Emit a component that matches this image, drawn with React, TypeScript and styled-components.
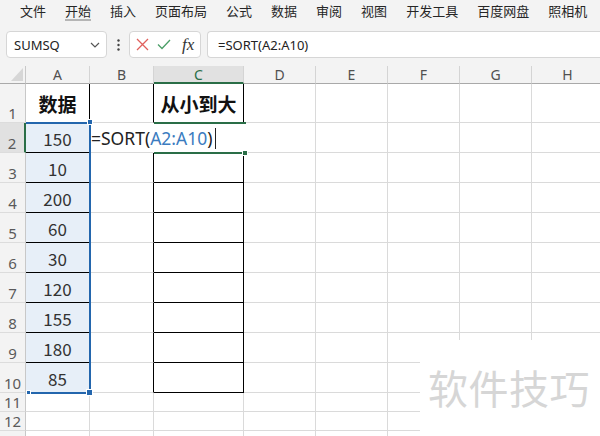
import React from 'react';
import styled, { createGlobalStyle } from 'styled-components';

const GlobalStyle = createGlobalStyle`
  html, body {
    margin: 0;
    padding: 0;
  }
  body {
    width: 600px;
    height: 436px;
    overflow: hidden;
    background: #ffffff;
    font-family: "Noto Sans", "Noto Sans CJK SC", sans-serif;
  }
`;

const GRID = '#dadada';
const INK = '#000000';
const GREEN = '#2a6e47';
const BLUE = '#2366ad';

const Page = styled.div`
  width: 600px;
  height: 436px;
  overflow: hidden;
  display: flex;
  flex-direction: column;
`;

const TopArea = styled.div`
  background: #f3f3f3;
  padding-bottom: 8px;
`;

const MenuBar = styled.div`
  height: 22px;
  display: flex;
  align-items: flex-start;
  gap: 19px;
  padding-left: 20px;
`;

const MenuItem = styled.div<{ $active?: boolean }>`
  height: 18px;
  padding-top: 1px;
  display: flex;
  align-items: center;
  font-family: "Noto Sans CJK SC", sans-serif;
  font-size: 13px;
  color: #262626;
  white-space: nowrap;
  border-bottom: 2px solid ${(p) => (p.$active ? '#b5b5b5' : 'transparent')};
`;

const FormulaBar = styled.div`
  margin-top: 9px;
  height: 27px;
  display: flex;
`;

const NameBox = styled.div`
  margin-left: 6px;
  width: 101px;
  box-sizing: border-box;
  background: #fff;
  border: 1px solid #d6d6d6;
  border-radius: 4px;
  display: flex;
  align-items: center;
  justify-content: space-between;
  padding: 0 6px 0 7px;
  font-size: 13px;
  color: #222;
`;

const Dots = styled.div`
  width: 22px;
  display: flex;
  align-items: center;
  justify-content: center;
`;

const IconBox = styled.div`
  width: 72px;
  box-sizing: border-box;
  background: #fff;
  border: 1px solid #d6d6d6;
  border-radius: 4px;
  display: flex;
  align-items: center;
  gap: 8px;
  padding-left: 6px;
`;

const Fx = styled.span`
  font-family: "Liberation Serif", serif;
  font-style: italic;
  font-size: 17px;
  color: #333;
  margin-left: 3px;
  line-height: 1;
`;

const FormulaInput = styled.div`
  margin-left: 6px;
  flex: 1;
  background: #fff;
  border: 1px solid #d6d6d6;
  border-right: none;
  border-radius: 4px 0 0 4px;
  display: flex;
  align-items: center;
  padding-left: 10px;
  font-size: 13px;
  color: #222;
`;

const Sheet = styled.div`
  position: relative;
  display: grid;
  grid-template-columns: 26px 64px 64px 90px 72px 72px 72px 72px 72px;
  grid-template-rows: 18px 39px repeat(9, 30px) repeat(3, 19px);
`;

const Corner = styled.div`
  background: #f3f3f3;
  border-right: 1px solid #c8c8c8;
  border-bottom: 1px solid #a9a9a9;
  box-sizing: border-box;
  display: flex;
  align-items: flex-end;
  justify-content: flex-end;
  padding: 0 2px 2px 0;
`;

const ColHead = styled.div<{ $active?: boolean }>`
  box-sizing: border-box;
  background: ${(p) => (p.$active ? '#e1e1e1' : '#f3f3f3')};
  border-right: 1px solid #d4d4d4;
  border-bottom: ${(p) => (p.$active ? `2px solid ${GREEN}` : '1px solid #a9a9a9')};
  display: flex;
  align-items: center;
  justify-content: center;
  font-size: 14px;
  color: ${(p) => (p.$active ? GREEN : '#505050')};
  line-height: 1;
  padding-top: 1px;
`;

const RowHead = styled.div<{ $active?: boolean }>`
  box-sizing: border-box;
  background: ${(p) => (p.$active ? '#e1e1e1' : '#f3f3f3')};
  border-right: ${(p) => (p.$active ? `2px solid ${GREEN}` : '1px solid #c8c8c8')};
  border-bottom: 1px solid #dcdcdc;
  display: flex;
  align-items: flex-end;
  justify-content: center;
  font-size: 15px;
  line-height: 1;
  color: #5a5a5a;
  padding-bottom: 1px;
`;

const Cell = styled.div<{ $fill?: string; $right?: string; $bottom?: string; $bold?: boolean; $left?: boolean }>`
  box-sizing: border-box;
  background: ${(p) => p.$fill ?? '#ffffff'};
  border-right: 1px solid ${(p) => p.$right ?? GRID};
  border-bottom: 1px solid ${(p) => p.$bottom ?? GRID};
  display: flex;
  align-items: center;
  justify-content: ${(p) => (p.$left ? 'flex-start' : 'center')};
  font-family: "Noto Sans CJK SC", sans-serif;
  font-size: ${(p) => (p.$bold ? '19px' : '17px')};
  font-weight: ${(p) => (p.$bold ? 700 : 400)};
  color: ${(p) => (p.$bold ? '#111' : '#333')};
  white-space: nowrap;
  overflow: visible;
  padding-top: 1px;
`;

const FormulaText = styled.span`
  position: relative;
  z-index: 2;
  display: flex;
  align-items: center;
  padding-left: 1px;
  font-family: "Noto Sans", sans-serif;
  font-size: 17.5px;
  color: #222;
`;

const Ref = styled.span`
  color: #3b7cc0;
`;

const Caret = styled.span`
  display: inline-block;
  width: 1px;
  height: 21px;
  margin-left: 2px;
  background: #222;
`;

const RangeFrame = styled.div`
  position: absolute;
  left: 26px;
  top: 56px;
  width: 65px;
  height: 272px;
  box-sizing: border-box;
  border: 2px solid ${BLUE};
  border-left: none;
  pointer-events: none;
`;

const ActiveFrame = styled.div`
  position: absolute;
  left: 154px;
  top: 56px;
  width: 92px;
  height: 32px;
  box-sizing: border-box;
  border-top: 2px solid ${GREEN};
  border-bottom: 2px solid ${GREEN};
  pointer-events: none;
`;

const Handle = styled.div<{ $x: number; $y: number; $size: number; $color: string }>`
  position: absolute;
  left: ${(p) => p.$x}px;
  top: ${(p) => p.$y}px;
  width: ${(p) => p.$size}px;
  height: ${(p) => p.$size}px;
  background: ${(p) => p.$color};
  border: 1px solid #fff;
  box-sizing: content-box;
  margin: -1px 0 0 -1px;
`;

const WatermarkPatch = styled.div`
  position: absolute;
  left: 420px;
  top: 274px;
  right: 0;
  bottom: 0;
  background: #ffffff;
  padding: 27px 0 0 8px;
`;

const Watermark = styled.div`
  font-family: "Noto Sans CJK SC", sans-serif;
  font-size: 40px;
  line-height: 1;
  letter-spacing: 0.5px;
  color: #d6d6d6;
  white-space: nowrap;
`;

const menus = ['文件', '开始', '插入', '页面布局', '公式', '数据', '审阅', '视图', '开发工具', '百度网盘', '照相机'];
const cols = ['A', 'B', 'C', 'D', 'E', 'F', 'G', 'H'];
const values = ['150', '10', '200', '60', '30', '120', '155', '180', '85'];
const rowCount = 13;

function renderCell(row: number, col: number) {
  const key = `${cols[col]}${row}`;
  if (col === 0 && row <= 10) {
    if (row === 1) {
      return (
        <Cell key={key} $right={INK} $bottom={INK} $bold>
          数据
        </Cell>
      );
    }
    return (
      <Cell key={key} $fill="#e7eff8" $right={INK} $bottom={INK}>
        {values[row - 2]}
      </Cell>
    );
  }
  if (col === 1 && row <= 10) {
    // the cell being edited: its text runs over C2, so no border is drawn there
    if (row === 2) {
      return (
        <Cell key={key} $right="#ffffff" $left>
          <FormulaText>
            =SORT(<Ref>A2:A10</Ref>)<Caret />
          </FormulaText>
        </Cell>
      );
    }
    return <Cell key={key} $right={INK} />;
  }
  if (col === 2 && row <= 10) {
    return (
      <Cell key={key} $right={row === 2 ? '#ffffff' : INK} $bottom={INK} $bold={row === 1}>
        {row === 1 ? '从小到大' : null}
      </Cell>
    );
  }
  return <Cell key={key} />;
}

function App() {
  const rows = Array.from({ length: rowCount }, (_, i) => i + 1);

  return (
    <Page>
      <GlobalStyle />
      <TopArea>
        <MenuBar>
          {menus.map((m) => (
            <MenuItem key={m} $active={m === '开始'}>
              {m}
            </MenuItem>
          ))}
        </MenuBar>
        <FormulaBar>
          <NameBox>
            <span>SUMSQ</span>
            <svg width="10" height="6" viewBox="0 0 10 6" fill="none">
              <path d="M1 1L5 5L9 1" stroke="#555" strokeWidth="1.2" />
            </svg>
          </NameBox>
          <Dots>
            <svg width="3" height="12" viewBox="0 0 3 12">
              <circle cx="1.5" cy="1.5" r="1.2" fill="#444" />
              <circle cx="1.5" cy="6" r="1.2" fill="#444" />
              <circle cx="1.5" cy="10.5" r="1.2" fill="#444" />
            </svg>
          </Dots>
          <IconBox>
            <svg width="13" height="13" viewBox="0 0 13 13" fill="none">
              <path d="M1 1L12 12M12 1L1 12" stroke="#e0605c" strokeWidth="1.3" />
            </svg>
            <svg width="14" height="11" viewBox="0 0 14 11" fill="none">
              <path d="M1 5.5L5 9.5L13 1" stroke="#4b9e67" strokeWidth="1.3" />
            </svg>
            <Fx>fx</Fx>
          </IconBox>
          <FormulaInput>=SORT(A2:A10)</FormulaInput>
        </FormulaBar>
      </TopArea>
      <Sheet>
        <Corner>
          <svg width="12" height="13" viewBox="0 0 12 13">
            <polygon points="12,0 12,13 0,13" fill="#d6d6d6" />
          </svg>
        </Corner>
        {cols.map((c) => (
          <ColHead key={c} $active={c === 'C'}>
            {c}
          </ColHead>
        ))}
        {rows.map((r) => (
          <React.Fragment key={r}>
            <RowHead $active={r === 2}>{r < rowCount ? r : null}</RowHead>
            {cols.map((_, ci) => renderCell(r, ci))}
          </React.Fragment>
        ))}
        <RangeFrame />
        <Handle $x={88} $y={54} $size={4} $color={BLUE} />
        <Handle $x={27} $y={325} $size={3} $color={BLUE} />
        <Handle $x={87} $y={324} $size={5} $color={BLUE} />
        <ActiveFrame />
        <Handle $x={243} $y={85} $size={4} $color={GREEN} />
        <WatermarkPatch>
          <Watermark>软件技巧</Watermark>
        </WatermarkPatch>
      </Sheet>
    </Page>
  );
}

export default App;
